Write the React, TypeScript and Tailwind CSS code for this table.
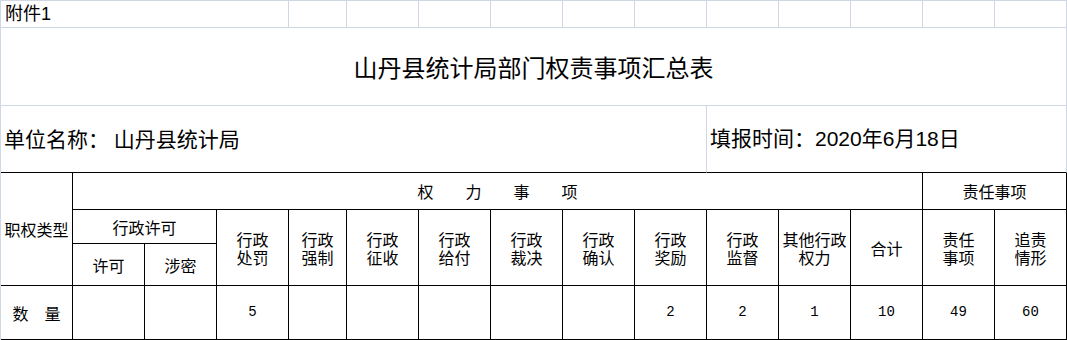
import type { ReactNode } from 'react';

// Excel-style gridline colour for the sheet area outside the table
const cjk = "font-['Noto_Sans_CJK_SC',sans-serif]";

interface CellProps {
  className?: string;
  children?: ReactNode;
}

// black-ruled table cell
const TCell = ({ className = '', children }: CellProps) => (
  <div
    className={`box-border flex items-center justify-center border-r border-b border-black text-center text-[16px] leading-[18px] text-black ${cjk} ${className}`}
  >
    {children}
  </div>
);

// number cell in the data row
const NumCell = ({ value }: { value?: string }) => (
  <div className="box-border flex items-center justify-center border-r border-b border-black font-['Liberation_Mono',monospace] text-[14px] text-black">
    {value}
  </div>
);

const headerCols: ReactNode[] = [
  <>行政<br />处罚</>,
  <>行政<br />强制</>,
  <>行政<br />征收</>,
  <>行政<br />给付</>,
  <>行政<br />裁决</>,
  <>行政<br />确认</>,
  <>行政<br />奖励</>,
  <>行政<br />监督</>,
  <>其他行政<br />权力</>,
  <>合计</>,
  <>责任<br />事项</>,
  <>追责<br />情形</>,
];

const dataRow = ['', '', '5', '', '', '', '', '', '2', '2', '1', '10', '49', '60'];

export default function App() {
  return (
    <div className="h-[340px] w-[1067px] overflow-hidden bg-white">
      <div className="box-border grid w-[1067px] grid-cols-[repeat(4,72px)_58px_repeat(10,72px)] grid-rows-[27px_78px_67px_37px_34px_42px_54px] border-t border-l border-[#d0d7e5]">
        {/* row 1 */}
        <div className="col-span-4 box-border flex items-center border-r border-b border-[#d0d7e5] pl-1 font-['Liberation_Sans','Noto_Sans_CJK_SC',sans-serif] text-[18px] text-black">
          附件1
        </div>
        {Array.from({ length: 11 }).map((_, i) => (
          <div key={i} className="box-border border-r border-b border-[#d0d7e5]" />
        ))}

        {/* title row */}
        <div className={`col-span-15 box-border flex items-center justify-center border-r border-b border-[#d0d7e5] text-[24px] text-black ${cjk}`}>
          山丹县统计局部门权责事项汇总表
        </div>

        {/* unit / date row */}
        <div className={`col-span-10 box-border flex items-center border-r border-b border-r-[#d0d7e5] border-b-black pl-[3px] text-[21px] text-black ${cjk}`}>
          单位名称：&nbsp;山丹县统计局
        </div>
        <div className="col-span-5 box-border flex items-center border-r border-b border-r-[#d0d7e5] border-b-black pl-[3px] font-['Liberation_Sans','Noto_Sans_CJK_SC',sans-serif] text-[21px] text-black">
          填报时间：2020年6月18日
        </div>

        {/* table header */}
        <TCell className="row-span-3">职权类型</TCell>
        <TCell className="col-span-12 gap-[32px]">
          <span>权</span>
          <span>力</span>
          <span>事</span>
          <span>项</span>
        </TCell>
        <TCell className="col-span-2">责任事项</TCell>

        <TCell className="col-span-2">行政许可</TCell>
        {headerCols.map((label, i) => (
          <TCell key={i} className="row-span-2">
            <div>{label}</div>
          </TCell>
        ))}
        <TCell>许可</TCell>
        <TCell>涉密</TCell>

        {/* data row */}
        <TCell>数　量</TCell>
        {dataRow.map((v, i) => (
          <NumCell key={i} value={v} />
        ))}
      </div>
    </div>
  );
}
